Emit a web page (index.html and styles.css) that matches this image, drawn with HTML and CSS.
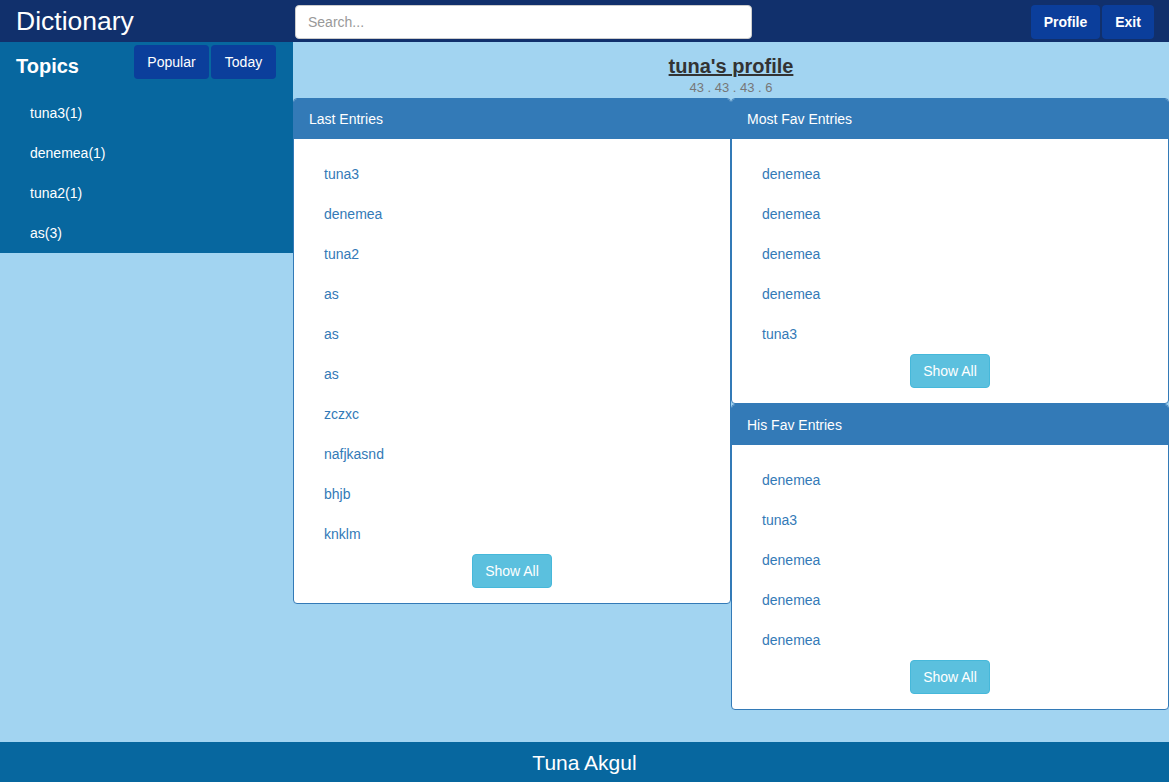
FILE: index.html
```html
<!DOCTYPE html>
<html>
<head>
<meta charset="utf-8">
<title>Dictionary</title>
<link rel="stylesheet" href="styles.css">
</head>
<body>
<div class="page">
  <header class="topbar">
    <div class="brand">Dictionary</div>
    <input class="search" type="text" placeholder="Search...">
    <div class="top-actions">
      <button class="nav-btn btn-profile">Profile</button>
      <button class="nav-btn btn-exit">Exit</button>
    </div>
  </header>
  <div class="content">
    <aside class="sidebar">
      <div class="side-head">
        <div class="side-title">Topics</div>
        <div class="side-buttons">
          <button class="nav-btn btn-popular">Popular</button>
          <button class="nav-btn btn-today">Today</button>
        </div>
      </div>
      <ul class="topic-list">
        <li>tuna3(1)</li>
        <li>denemea(1)</li>
        <li>tuna2(1)</li>
        <li>as(3)</li>
      </ul>
    </aside>
    <main class="main">
      <div class="profile-head">
        <div class="profile-title">tuna's profile</div>
        <div class="profile-sub">43 . 43 . 43 . 6</div>
      </div>
      <div class="columns">
        <div class="col">
          <div class="panel">
            <div class="panel-heading">Last Entries</div>
            <div class="panel-body">
              <ul class="entry-list">
                <li><a>tuna3</a></li>
                <li><a>denemea</a></li>
                <li><a>tuna2</a></li>
                <li><a>as</a></li>
                <li><a>as</a></li>
                <li><a>as</a></li>
                <li><a>zczxc</a></li>
                <li><a>nafjkasnd</a></li>
                <li><a>bhjb</a></li>
                <li><a>knklm</a></li>
              </ul>
              <div class="btn-row"><button class="btn-info">Show All</button></div>
            </div>
          </div>
        </div>
        <div class="col">
          <div class="panel">
            <div class="panel-heading">Most Fav Entries</div>
            <div class="panel-body">
              <ul class="entry-list">
                <li><a>denemea</a></li>
                <li><a>denemea</a></li>
                <li><a>denemea</a></li>
                <li><a>denemea</a></li>
                <li><a>tuna3</a></li>
              </ul>
              <div class="btn-row"><button class="btn-info">Show All</button></div>
            </div>
          </div>
          <div class="panel">
            <div class="panel-heading">His Fav Entries</div>
            <div class="panel-body">
              <ul class="entry-list">
                <li><a>denemea</a></li>
                <li><a>tuna3</a></li>
                <li><a>denemea</a></li>
                <li><a>denemea</a></li>
                <li><a>denemea</a></li>
              </ul>
              <div class="btn-row"><button class="btn-info">Show All</button></div>
            </div>
          </div>
        </div>
      </div>
    </main>
  </div>
  <footer class="footer">Tuna Akgul</footer>
</div>
</body>
</html>
```

FILE: styles.css
```css
* { box-sizing: border-box; }
html, body { margin: 0; padding: 0; }
body {
  font-family: "Liberation Sans", Arial, Helvetica, sans-serif;
  font-size: 14px;
  line-height: 20px;
  color: #333;
  background: #a2d4f1;
}
.page {
  height: 100vh;
  display: flex;
  flex-direction: column;
}
.topbar {
  height: 42px;
  flex: none;
  background: #11306c;
  display: flex;
  align-items: flex-start;
}
.brand {
  width: 295px;
  padding-left: 16px;
  color: #fff;
  font-size: 26.5px;
  line-height: 42px;
}
.search {
  margin-top: 5px;
  width: 457px;
  height: 34px;
  border: 1px solid #ccc;
  border-radius: 4px;
  padding: 6px 12px;
  font-family: inherit;
  font-size: 14px;
  color: #555;
  background: #fff;
}
.search::placeholder { color: #999; }
.top-actions {
  margin-left: auto;
  margin-right: 15px;
  margin-top: 5px;
  display: flex;
  gap: 2px;
}
.nav-btn {
  height: 34px;
  border: 0;
  border-radius: 4px;
  background: #0b3e9b;
  color: #fff;
  font-family: inherit;
  font-size: 14px;
  padding: 0;
}
.btn-profile { width: 69px; font-weight: bold; }
.btn-exit { width: 52px; font-weight: bold; }
.btn-popular { width: 75px; }
.btn-today { width: 65px; }

.content {
  flex: 1;
  display: flex;
  align-items: flex-start;
}
.sidebar {
  width: 293px;
  flex: none;
  background: #07679f;
}
.side-head {
  display: flex;
  align-items: flex-start;
  padding-top: 3px;
}
.side-title {
  width: 134px;
  padding-left: 16px;
  padding-top: 9px;
  color: #fff;
  font-size: 20px;
  font-weight: bold;
  line-height: 24px;
}
.side-buttons { display: flex; gap: 2px; }
.topic-list {
  list-style: none;
  margin: 14px 0 0;
  padding: 0;
}
.topic-list li {
  height: 40px;
  line-height: 40px;
  padding-left: 30px;
  color: #fff;
}

.main {
  flex: 1;
}
.profile-head {
  text-align: center;
  padding-top: 12px;
  height: 56px;
}
.profile-title {
  font-size: 20px;
  font-weight: bold;
  line-height: 24px;
  text-decoration: underline;
  color: #333;
}
.profile-sub {
  margin-top: 2px;
  font-size: 13px;
  line-height: 16px;
  color: #777;
}
.columns {
  display: grid;
  grid-template-columns: 438px 438px;
  align-items: start;
}
.panel {
  background: #fff;
  border: 1px solid #337ab7;
  border-radius: 4px;
}
.panel-heading {
  background: #337ab7;
  color: #fff;
  padding: 10px 15px;
  line-height: 20px;
  border-radius: 3px 3px 0 0;
}
.panel-body {
  padding: 15px;
}
.entry-list {
  list-style: none;
  margin: 0;
  padding: 0;
}
.entry-list li {
  height: 40px;
  line-height: 40px;
  padding-left: 15px;
}
.entry-list a {
  color: #337ab7;
  text-decoration: none;
}
.btn-row {
  display: flex;
  justify-content: center;
}
.btn-info {
  height: 34px;
  width: 80px;
  background: #5bc0de;
  border: 1px solid #46b8da;
  border-radius: 4px;
  color: #fff;
  font-family: inherit;
  font-size: 14px;
  padding: 0;
}
.footer {
  height: 40px;
  flex: none;
  background: #07679f;
  color: #fff;
  text-align: center;
  font-size: 21px;
  line-height: 42px;
}
```
